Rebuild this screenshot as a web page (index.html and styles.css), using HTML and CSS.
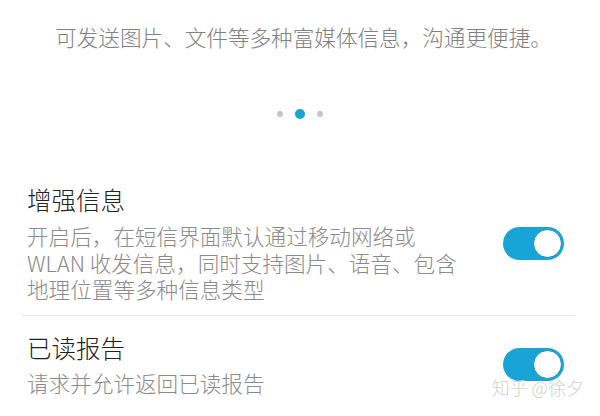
FILE: index.html
```html
<!DOCTYPE html>
<html lang="zh-CN">
<head>
    <meta charset="UTF-8">
    <meta name="viewport" content="width=device-width, initial-scale=1.0">
    <title>信息设置</title>
    <link rel="stylesheet" href="styles.css">
</head>
<body>
    <div class="page">
        <p class="intro">可发送图片、文件等多种富媒体信息，沟通更便捷。</p>

        <div class="dots">
            <span class="dot"></span>
            <span class="dot dot-active"></span>
            <span class="dot"></span>
        </div>

        <div class="settings">
            <div class="setting setting-first">
                <div class="setting-text">
                    <div class="setting-title">增强信息</div>
                    <div class="setting-desc">开启后，在短信界面默认通过移动网络或<br>WLAN 收发信息，同时支持图片、语音、包含<br>地理位置等多种信息类型</div>
                </div>
                <div class="switch"><span class="switch-thumb"></span></div>
            </div>
            <div class="setting setting-second">
                <div class="setting-text">
                    <div class="setting-title">已读报告</div>
                    <div class="setting-desc desc-short">请求并允许返回已读报告</div>
                </div>
                <div class="switch"><span class="switch-thumb"></span></div>
            </div>
        </div>

        <div class="watermark">知乎 @徐夕</div>
    </div>
</body>
</html>
```

FILE: styles.css
```css
body {
    margin: 0;
    background: #fff;
    font-family: "Noto Sans CJK SC", "Noto Sans", sans-serif;
    font-weight: 300;
}
.page {
    position: relative;
    width: 600px;
    height: 416px;
    overflow: hidden;
}
.intro {
    margin: 0;
    padding: 23px 0 0 7px;
    font-size: 21.6px;
    line-height: 28px;
    color: #808080;
    text-align: center;
}
.dots {
    display: flex;
    justify-content: center;
    align-items: center;
    gap: 12px;
    margin-top: 58px;
    height: 10px;
}
.dot {
    width: 6px;
    height: 6px;
    border-radius: 50%;
    background: #c4c4c4;
}
.dot-active {
    width: 10px;
    height: 10px;
    background: #18a4d6;
}
.settings {
    padding: 0 25px 0 22px;
    margin-top: 66px;
}
.setting {
    display: flex;
    align-items: center;
    justify-content: space-between;
    padding-left: 5px;
    padding-right: 11px;
}
.setting-first {
    padding-bottom: 12px;
    border-bottom: 1px solid #e6e6e6;
}
.setting-second {
    padding-top: 17px;
}
.setting-title {
    font-size: 24.5px;
    line-height: 30px;
    color: #222;
}
.setting-desc {
    margin-top: 8px;
    font-size: 21.6px;
    line-height: 26.5px;
    color: #8a8a8a;
}
.desc-short {
    margin-top: 7px;
}
.switch {
    display: flex;
    justify-content: flex-end;
    align-items: center;
    box-sizing: border-box;
    width: 61px;
    height: 33px;
    padding-right: 2px;
    border-radius: 17px;
    background: #18a4d6;
}
.switch-thumb {
    box-sizing: border-box;
    width: 29px;
    height: 29px;
    border-radius: 50%;
    border: 1.5px solid #0f8bb7;
    background: #fff;
}
.watermark {
    position: absolute;
    right: 16px;
    bottom: 18px;
    font-size: 18px;
    line-height: 22px;
    color: #d2d2d2;
}
```
